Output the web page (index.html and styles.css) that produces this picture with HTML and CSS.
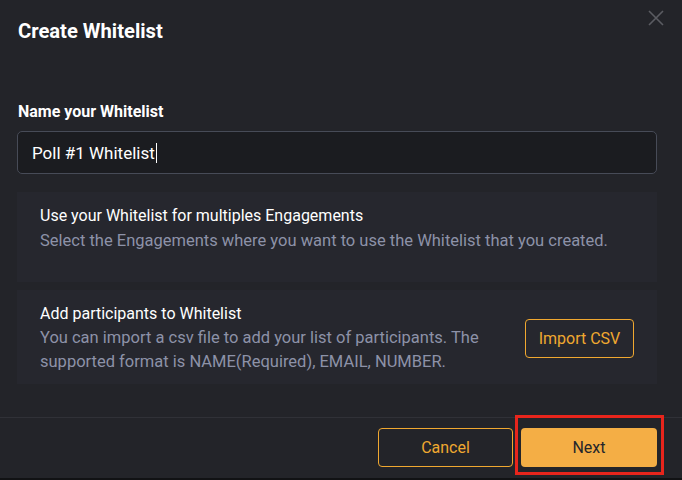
FILE: index.html
```html
<!DOCTYPE html>
<html>
<head>
<meta charset="utf-8">
<link rel="stylesheet" href="styles.css">
</head>
<body>
<div class="modal">
  <div class="header">
    <h1 class="title">Create Whitelist</h1>
    <button class="close" aria-label="Close">
      <svg width="16" height="16" viewBox="0 0 16 16"><path d="M1 1L15 15M15 1L1 15" stroke="#5b5c62" stroke-width="1.6" fill="none"/></svg>
    </button>
  </div>
  <div class="body">
    <label class="label">Name your Whitelist</label>
    <div class="input"><span>Poll #1 Whitelist</span><span class="caret"></span></div>
    <div class="card card-tall">
      <div class="card-text">
        <div class="card-title">Use your Whitelist for multiples Engagements</div>
        <div class="card-desc">Select the Engagements where you want to use the Whitelist that you created.</div>
      </div>
    </div>
    <div class="card">
      <div class="card-text narrow">
        <div class="card-title">Add participants to Whitelist</div>
        <div class="card-desc">You can import a csv file to add your list of participants. The supported format is NAME(Required), EMAIL, NUMBER.</div>
      </div>
      <button class="btn-outline import">Import CSV</button>
    </div>
  </div>
  <div class="footer">
    <button class="btn-outline cancel">Cancel</button>
    <button class="btn-primary">Next</button>
    <div class="highlight"></div>
  </div>
</div>
</body>
</html>
```
FILE: styles.css
```css
* { box-sizing: border-box; }
html, body { margin: 0; padding: 0; background: #111214; }
body { font-family: Roboto, "Noto Sans", sans-serif; }
.modal {
  width: 682px;
  height: 478px;
  background: #232429;
  position: relative;
  display: flex;
  flex-direction: column;
}
.header {
  display: flex;
  justify-content: space-between;
  align-items: flex-start;
  padding: 18px 18px 0 18px;
  height: 102px;
}
.title {
  margin: 0;
  font-size: 20.2px;
  line-height: 26px;
  font-weight: 700;
  color: #ffffff;
}
.close {
  background: none;
  border: 0;
  padding: 0;
  margin: -8px 0 0 0;
  width: 16px;
  height: 16px;
  display: block;
}
.close svg { display: block; }
.body {
  padding: 0 25px 0 17px;
  display: flex;
  flex-direction: column;
}
.label {
  display: block;
  font-size: 16px;
  font-weight: 700;
  line-height: 20px;
  color: #ffffff;
  padding-left: 1px;
  margin-bottom: 9px;
}
.input {
  height: 43px;
  border: 1px solid #474b57;
  border-radius: 5px;
  background: #1b1c20;
  display: flex;
  align-items: center;
  padding: 0 14px;
  font-size: 17px;
  color: #ffffff;
  margin-bottom: 18px;
}
.caret {
  display: inline-block;
  width: 1px;
  height: 20px;
  background: #ffffff;
  margin-left: 1px;
}
.card {
  background: #26272e;
  display: flex;
  align-items: center;
  justify-content: space-between;
  padding: 12px 23px 10px 23px;
  margin-bottom: 8px;
}
.card-tall {
  min-height: 90px;
  align-items: flex-start;
}
.card-title {
  font-size: 16px;
  line-height: 24px;
  color: #ffffff;
}
.card-desc {
  font-size: 16.5px;
  line-height: 24px;
  color: #8d92a8;
}
.card-tall .card-desc { margin-top: 1px; }
.narrow { width: 470px; }
.btn-outline {
  font-family: inherit;
  background: transparent;
  border: 1px solid #f0a830;
  color: #f0a830;
  border-radius: 4px;
  font-size: 16px;
}
.import {
  width: 109px;
  height: 39px;
  padding: 0;
}
.footer {
  margin-top: auto;
  border-top: 1px solid #303137;
  height: 61px;
  display: flex;
  justify-content: flex-end;
  align-items: flex-start;
  padding: 10px 25px 0 0;
  gap: 8px;
  position: relative;
}
.cancel {
  width: 135px;
  height: 39px;
}
.btn-primary {
  font-family: inherit;
  width: 136px;
  height: 39px;
  background: #f4ae45;
  border: 0;
  border-radius: 4px;
  color: #25262b;
  font-size: 16px;
}
.highlight {
  position: absolute;
  left: 515px;
  top: -3px;
  width: 149px;
  height: 60px;
  border: 3px solid #e8251c;
  pointer-events: none;
}
```
